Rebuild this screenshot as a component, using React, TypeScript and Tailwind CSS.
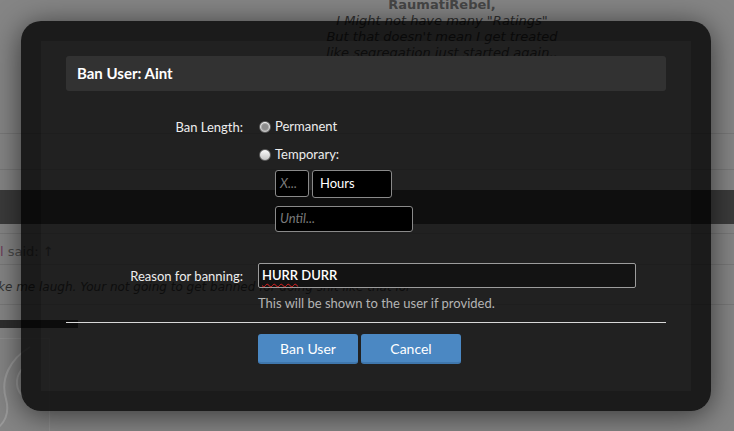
import React from 'react';

const Radio: React.FC<{ checked?: boolean }> = ({ checked }) => (
  <span className="flex h-[12px] w-[12px] shrink-0 items-center justify-center rounded-full border border-[#5c5c5c] bg-linear-to-b from-[#fbfbfb] to-[#c4c4c4]">
    {checked && <span className="h-[6px] w-[6px] rounded-full bg-[#8c8c8c] ring-1 ring-[#a8a8a8]" />}
  </span>
);

const App: React.FC = () => {
  return (
    <div className="relative h-[431px] w-[734px] overflow-hidden bg-[#858585] font-['DejaVu_Sans',sans-serif]">
      {/* page behind the overlay */}
      <div className="-mt-[3px] ml-[312px] w-[260px] text-center text-[13px] leading-4 text-[#303030]">
        <div className="font-bold text-[#464646]">RaumatiRebel,</div>
        <div className="italic">I Might not have many "Ratings"</div>
        <div className="italic">But that doesn't mean I get treated</div>
        <div className="italic">like segregation just started again..</div>
      </div>
      <div className="mt-[72px] h-[37px] border-y border-[#787878]" />
      <div className="mt-[20px] h-[34px] bg-[#3b3b3b]" />
      <div className="h-[10px] border-b border-[#787878]" />
      <div className="flex h-[31px] items-center border-b border-[#787878] pt-[6px] text-[13px] text-[#4a4a4a]">
        <span className="text-[#6a3a5a]">l</span>&nbsp;said: ↑
      </div>
      <div className="flex h-[40px] items-center border-b border-[#787878] pt-[5px] text-[12px] italic text-[#333]">
        <span className="-ml-[2px]">ke me laugh. Your not going to get banned for doing shit like that lol</span>
      </div>
      <div className="mt-[15px] h-[8px] w-[78px] bg-[#2e2e2e]" />
      <div className="mt-[10px] h-[100px] w-[50px] border-r border-t border-[#8e8e8e]">
        <svg width="50" height="100" viewBox="0 0 50 100" fill="none" stroke="#9a9a9a" strokeWidth="2">
          <path d="M30 8 C 10 20, 0 40, 6 60 C 10 75, 4 85, -4 90" />
          <path d="M22 30 C 14 40, 16 52, 24 58" />
        </svg>
      </div>

      {/* modal */}
      <div className="absolute left-[21px] top-[21px] h-[390px] w-[690px] rounded-[20px] border-[20px] border-[rgba(0,0,0,0.8)] bg-[rgba(2,2,2,0.77)] bg-clip-padding font-['Lato',sans-serif] shadow-[0_4px_30px_rgba(0,0,0,0.6)]">
        <div className="px-[25px] pt-[15px]">
          <div className="flex h-[35px] items-center rounded-[3px] bg-[#323232] pl-[11px] text-[15px] font-bold text-white">
            Ban User: Aint
          </div>

          <div className="mt-[28px] flex">
            <div className="w-[177px] text-right text-[13px] leading-4 text-[#ededed]">Ban Length:</div>
            <div className="ml-[15px]">
              <div className="flex h-4 items-center gap-[4px] pl-[1px] text-[13px] text-[#ededed]">
                <Radio checked />
                Permanent
              </div>
              <div className="mt-[12px] flex h-4 items-center gap-[4px] pl-[1px] text-[13px] text-[#ededed]">
                <Radio />
                Temporary:
              </div>
              <div className="ml-[17px] mt-[7px] flex gap-[3px]">
                <div className="flex h-[27px] w-[34px] items-center rounded-[3px] border border-[#8a8a8a] bg-black pl-[4px] text-[13px] italic text-[#7a7a7a]">
                  X...
                </div>
                <div className="flex h-[28px] w-[80px] items-center rounded-[3px] border border-[#8a8a8a] bg-black pl-[7px] text-[13px] text-white">
                  Hours
                </div>
              </div>
              <div className="ml-[17px] mt-[8px] flex h-[26px] w-[138px] items-center rounded-[3px] border border-[#8a8a8a] bg-black pl-[4px] text-[13px] italic text-[#7a7a7a]">
                Until...
              </div>
            </div>
          </div>

          <div className="mt-[31px] flex items-center">
            <div className="w-[177px] text-right text-[13px] leading-4 text-[#ededed]">Reason for banning:</div>
            <div className="ml-[15px] flex h-[25px] w-[378px] items-center rounded-[2px] border border-[#9c9c9c] bg-[#131313] pl-[3px] text-[13px] font-semibold text-white">
              <span className="underline decoration-[#e02020] decoration-wavy decoration-1 underline-offset-[3px]">HURR</span>
              &nbsp;DURR
            </div>
          </div>
          <div className="ml-[192px] mt-[7px] text-[13px] leading-4 text-[#b4b4b4]">
            This will be shown to the user if provided.
          </div>

          <div className="mt-[11px] h-px bg-[#d8d8d8]" />

          <div className="ml-[192px] mt-[11px] flex gap-[3px]">
            <button className="h-[30px] w-[100px] rounded-[3px] border-b-2 border-[#3f77ad] bg-[#4b88c3] text-[14px] text-white">
              Ban User
            </button>
            <button className="h-[30px] w-[100px] rounded-[3px] border-b-2 border-[#3f77ad] bg-[#4b88c3] text-[14px] text-white">
              Cancel
            </button>
          </div>
        </div>
      </div>
    </div>
  );
};

export default App;
